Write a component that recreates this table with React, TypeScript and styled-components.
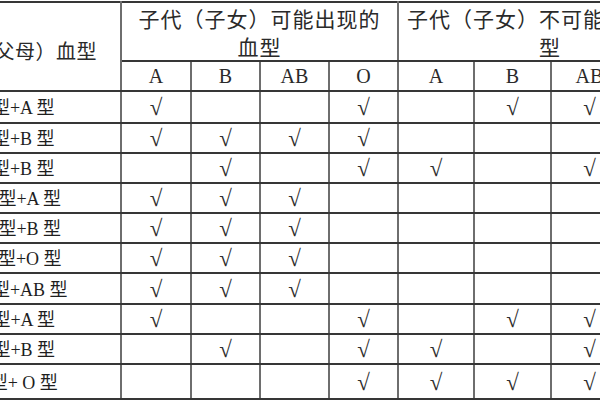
import styled, { createGlobalStyle } from 'styled-components'

const GlobalStyle = createGlobalStyle`
  html, body {
    margin: 0;
    padding: 0;
    background: #fff;
  }
`

const columns = ['A', 'B', 'AB', 'O']

// widths of the columns, the first one runs off the left edge of the shot
const colWidths = [212, 70, 69, 69, 69, 76, 77, 77, 74]

const rows = [
  { label: 'A 型+A 型', h: 32, can: ['A', 'O'], cannot: ['B', 'AB'] },
  { label: 'A 型+B 型', h: 30, can: ['A', 'B', 'AB', 'O'], cannot: [] },
  { label: 'B 型+B 型', h: 30, can: ['B', 'O'], cannot: ['A', 'AB'] },
  { label: 'AB 型+A 型', h: 30, can: ['A', 'B', 'AB'], cannot: [] },
  { label: 'AB 型+B 型', h: 30, can: ['A', 'B', 'AB'], cannot: [] },
  { label: 'AB 型+O 型', h: 30, can: ['A', 'B', 'AB'], cannot: [] },
  { label: 'AB 型+AB 型', h: 31, can: ['A', 'B', 'AB'], cannot: [] },
  { label: 'O 型+A 型', h: 30, can: ['A', 'O'], cannot: ['B', 'AB'] },
  { label: 'O 型+B 型', h: 30, can: ['B', 'O'], cannot: ['A', 'AB'] },
  { label: 'O 型+ O 型', h: 35, can: ['O'], cannot: ['A', 'B', 'AB'] },
]

const Viewport = styled.div`
  width: 600px;
  height: 400px;
  overflow: hidden;
  background: #fff;
`

const Table = styled.table`
  border-collapse: collapse;
  table-layout: fixed;
  width: 793px;
  margin-left: -92px;
  margin-top: 1px;
  color: #222;
  font-family: 'Liberation Serif', 'Noto Sans CJK SC', serif;
`

const Row = styled.tr<{ $h: number }>`
  height: ${(p) => p.$h}px;
`

const Cell = styled.td`
  border-top: 2px solid #363636;
  border-bottom: 2px solid #363636;
  border-left: 2px solid #6e6e6e;
  border-right: 2px solid #6e6e6e;
  padding: 0;
  text-align: center;
  vertical-align: middle;
  line-height: 1;
`

const GroupHead = styled(Cell).attrs({ as: 'th' })`
  font-weight: normal;
  font-family: 'Noto Sans CJK SC', sans-serif;
  font-size: 21px;
  letter-spacing: 1px;
  line-height: 28px;
  color: #2a2a2a;
  padding-top: 1px;
  white-space: nowrap;
`

const ParentHead = styled(GroupHead)`
  font-size: 20px;
  letter-spacing: 0.5px;
  padding-top: 8px;
`

const TypeHead = styled(Cell).attrs({ as: 'th' })`
  font-weight: normal;
  font-size: 20px;
  color: #2a2a2a;
`

const Label = styled(Cell)`
  font-size: 18px;
  white-space: nowrap;
  color: #1e1e1e;

  span {
    font-family: 'Noto Sans CJK SC', sans-serif;
  }
`

const Mark = styled(Cell)`
  font-size: 23px;
  color: #2e2e2e;
  padding-top: 1px;
`

function renderLabel(text: string) {
  const parts = text.split('型')
  return parts.map((part, i) => (
    <i key={i} style={{ fontStyle: 'normal' }}>
      {part}
      {i < parts.length - 1 && <span>型</span>}
    </i>
  ))
}

function App() {
  return (
    <>
      <GlobalStyle />
      <Viewport>
        <Table>
          <colgroup>
            {colWidths.map((w, i) => (
              <col key={i} style={{ width: w }} />
            ))}
          </colgroup>
          <tbody>
            <Row $h={59}>
              <ParentHead rowSpan={2}>亲代（父母）血型</ParentHead>
              <GroupHead colSpan={4}>
                子代（子女）可能出现的
                <br />
                血型
              </GroupHead>
              <GroupHead colSpan={4}>
                子代（子女）不可能出现的血
                <br />
                型
              </GroupHead>
            </Row>
            <Row $h={30}>
              {columns.map((c) => (
                <TypeHead key={'c' + c}>{c}</TypeHead>
              ))}
              {columns.map((c) => (
                <TypeHead key={'n' + c}>{c}</TypeHead>
              ))}
            </Row>
            {rows.map((row) => (
              <Row $h={row.h} key={row.label}>
                <Label>{renderLabel(row.label)}</Label>
                {columns.map((c) => (
                  <Mark key={'c' + c}>{row.can.includes(c) ? '√' : ''}</Mark>
                ))}
                {columns.map((c) => (
                  <Mark key={'n' + c}>{row.cannot.includes(c) ? '√' : ''}</Mark>
                ))}
              </Row>
            ))}
          </tbody>
        </Table>
      </Viewport>
    </>
  )
}

export default App
